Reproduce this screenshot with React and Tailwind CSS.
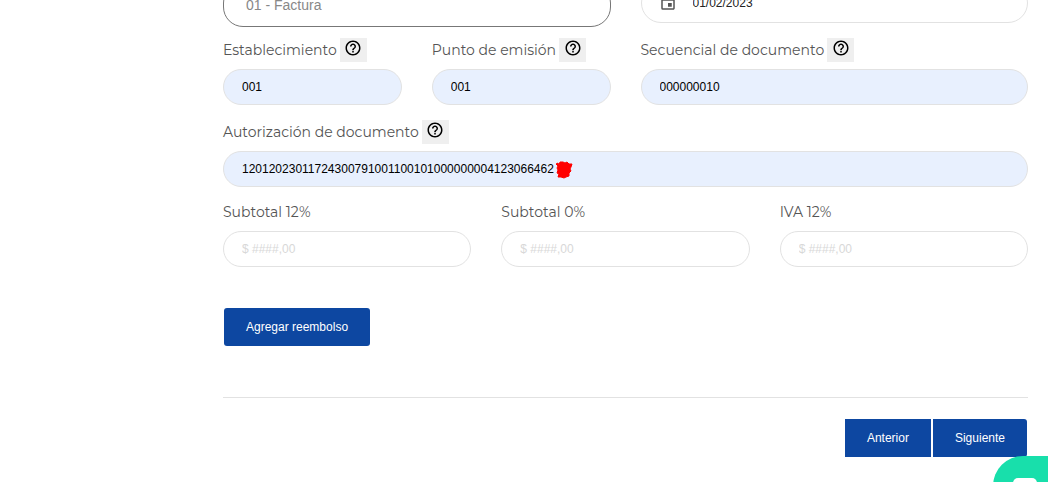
import { MdOutlineHelpOutline, MdOutlineInsertInvitation } from "react-icons/md";

const LABEL = "font-[Montserrat,Inter,sans-serif] text-sm leading-6 text-[#555]";
const INPUT =
  "h-9 w-full rounded-full border border-[#e2e2e2] px-[18px] text-xs text-black placeholder:text-[#d8d8d8] placeholder:opacity-100";

const Field = ({ id, label, help, filled, className, children, ...props }) => (
  <div className={className}>
    <div className="mb-[7px] flex items-center gap-[3px]">
      <label htmlFor={id} className={LABEL}>
        {label}
      </label>
      {help && (
        <button
          type="button"
          aria-label={`Ayuda: ${label}`}
          className="flex h-6 w-[27px] items-start justify-center bg-[#efefef] pt-px text-black"
        >
          <MdOutlineHelpOutline size={18} />
        </button>
      )}
    </div>
    <div className="relative">
      <input
        id={id}
        type="text"
        className={`${INPUT} ${filled ? "bg-[#e8f0fe]" : "bg-white"}`}
        {...props}
      />
      {children}
    </div>
  </div>
);

// Red marker that hides the last digits
const Scribble = () => (
  <svg
    className="absolute top-[9px] left-[332px]"
    width="20"
    height="20"
    viewBox="0 0 20 20"
    fill="#ff0000"
    stroke="#ff0000"
    strokeLinejoin="round"
    aria-hidden="true"
  >
    <path d="M1 4 3 3 4 5 5 2 8 2 10 3 12 2 14 4 17 4 16 7 15 9 16 11 14 13 14 16 11 17 9 18 6 17 3 17 4 14 2 13 3 10 2 8 3 6Z" />
  </svg>
);

const App = () => (
  <div className="overflow-hidden bg-white font-['Liberation_Sans',Arial,sans-serif]">
    <form className="-mt-[17px] ml-[223px] mr-5" onSubmit={(e) => e.preventDefault()}>
      <div className="grid grid-cols-4 gap-x-[30px]">
        <select
          aria-label="Tipo de documento"
          defaultValue="01"
          className="col-span-2 h-11 appearance-none rounded-[20px] border border-[#777] bg-white px-[22px] text-sm text-[#888]"
        >
          <option value="01">01 - Factura</option>
        </select>
        <div className="col-span-2 flex h-10 items-center gap-4 rounded-[20px] border border-[#e2e2e2] px-[17px]">
          <MdOutlineInsertInvitation size={18} className="text-[#555]" aria-hidden="true" />
          <input
            type="text"
            aria-label="Fecha de emisión"
            defaultValue="01/02/2023"
            className="min-w-0 flex-1 text-xs text-[#222]"
          />
        </div>
      </div>

      <div className="mt-[11px] grid grid-cols-4 gap-x-[30px]">
        <Field id="establecimiento" label="Establecimiento" defaultValue="001" help filled />
        <Field id="punto" label="Punto de emisión" defaultValue="001" help filled />
        <Field
          id="secuencial"
          label="Secuencial de documento"
          defaultValue="000000010"
          className="col-span-2"
          help
          filled
        />
      </div>

      <Field
        id="autorizacion"
        label="Autorización de documento"
        defaultValue="12012023011724300791001100101000000004123066462"
        className="mt-[15px]"
        help
        filled
      >
        <Scribble />
      </Field>

      <div className="mt-[13px] grid grid-cols-3 gap-x-[30px]">
        <Field id="subtotal12" label="Subtotal 12%" placeholder="$ ####,00" />
        <Field id="subtotal0" label="Subtotal 0%" placeholder="$ ####,00" />
        <Field id="iva" label="IVA 12%" placeholder="$ ####,00" />
      </div>

      <button
        type="button"
        className="mt-[41px] ml-px block rounded-[3px] bg-[#0d47a1] px-[22px] py-[11px] text-xs text-white"
      >
        Agregar reembolso
      </button>

      <hr className="mt-[51px] border-[#e2e2e2]" />

      <div className="mt-[21px] mr-px flex justify-end gap-0.5 pb-6">
        <button type="button" className="bg-[#0d47a1] px-[22px] py-[11px] text-xs text-white">
          Anterior
        </button>
        <button
          type="submit"
          className="rounded-r-[3px] bg-[#0d47a1] px-[22px] py-[11px] text-xs text-white"
        >
          Siguiente
        </button>
      </div>
    </form>

    <button
      type="button"
      aria-label="Chat"
      className="fixed -right-2 -bottom-9 flex h-[62px] w-[63px] justify-center rounded-tl-[30px] bg-[#18dfab] pt-[22px]"
    >
      <svg width="24" height="24" viewBox="0 0 24 24" fill="#fff" aria-hidden="true">
        <rect width="24" height="20" rx="5" />
      </svg>
    </button>
  </div>
);

export default App;
